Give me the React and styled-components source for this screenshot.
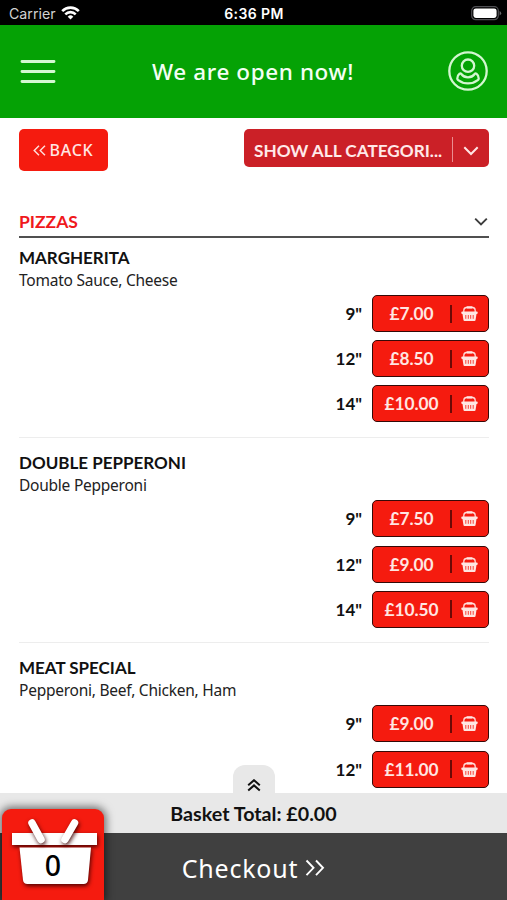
import React from 'react'
import styled, { createGlobalStyle } from 'styled-components'

const menu = [
    {
        name: "MARGHERITA",
        info: "Tomato Sauce, Cheese",
        sizes: [['9"', "£7.00"], ['12"', "£8.50"], ['14"', "£10.00"]],
    },
    {
        name: "DOUBLE PEPPERONI",
        info: "Double Pepperoni",
        sizes: [['9"', "£7.50"], ['12"', "£9.00"], ['14"', "£10.50"]],
    },
    {
        name: "MEAT SPECIAL",
        info: "Pepperoni, Beef, Chicken, Ham",
        sizes: [['9"', "£9.00"], ['12"', "£11.00"]],
    },
]

function StatusBar() {
    return (
        <StatusWrapper>
            <div className="carrier">
                <span>Carrier</span>
                <svg width="19" height="14" viewBox="0 0 19 14" fill="none" stroke="#fff" strokeWidth="2.6">
                    <path d="M1.2 5.1a11.7 11.7 0 0 1 16.6 0" />
                    <path d="M4.3 8.3a7.4 7.4 0 0 1 10.4 0" />
                    <path d="M9.5 13.6L6.7 10.7a4 4 0 0 1 5.6 0z" fill="#fff" stroke="none" />
                </svg>
            </div>
            <div className="time">6:36 PM</div>
            <svg className="battery" width="31" height="15" viewBox="0 0 31 15">
                <rect x="0.7" y="0.7" width="26.6" height="13" rx="4" fill="none" stroke="#505054" strokeWidth="1.2" />
                <rect x="2.4" y="2.4" width="23.2" height="9.6" rx="2.4" fill="#fff" />
                <path d="M28.6 5v4.6q1.6-.8 1.6-2.3t-1.6-2.3z" fill="#66666a" />
            </svg>
        </StatusWrapper>
    )
}

function Header() {
    return (
        <HeaderWrapper>
            <svg width="36" height="26" viewBox="0 0 36 26" stroke="#d5f8d2" strokeWidth="2.9" strokeLinecap="round">
                <path d="M2 2.5h32M2 12.5h32M2 22.5h32" />
            </svg>
            <h1>We are open now!</h1>
            <svg width="42" height="42" viewBox="0 0 42 42" fill="none" stroke="#d3f6d0" strokeWidth="2.3">
                <circle cx="21" cy="20" r="18.7" />
                <circle cx="21" cy="14.700" r="6.200" />
                <path d="M12.600 22.700Q10.300 24.500 10.300 27.400q0 1 .9 1.700 4.200 3.300 9.800 3.300t9.800-3.300q.9-.7.9-1.700 0-2.900-2.300-4.700-1-.6-1.700.3-2.600 3.400-6.700 3.400t-6.700-3.400q-.7-.9-1.700-.3z" strokeLinejoin="round" />
            </svg>
        </HeaderWrapper>
    )
}

function BasketIcon() {
    return (
        <svg width="17" height="17" viewBox="0 0 17 17">
            <path d="M2.800 7V5.400Q2.800 2.700 5.400 2.500h6.200q2.600.2 2.600 2.900V7" fill="none" stroke="#ffd9d4" strokeWidth="1.300" />
            <rect x="5.300" y="1.300" width="6.400" height="2.300" rx="1" fill="#ffe6e2" />
            <rect x="0.300" y="6.600" width="16.400" height="2.500" rx="1" fill="#ffe6e2" />
            <path d="M1.500 9h14l-1 6.200q-.2.800-1 .800H3.500q-.8 0-1-.8z" fill="#ffe6e2" />
            <path d="M4.800 10v3.800M7.300 10v3.800M9.700 10v3.800M12.200 10v3.800" stroke="#f51b0f" strokeWidth="0.800" />
        </svg>
    )
}

function MenuItem({ item }) {
    return (
        <ItemWrapper>
            <h3>{item.name}</h3>
            <p>{item.info}</p>
            <div className="sizes">
                {item.sizes.map(([size, price]) => (
                    <div className="size-row" key={size}>
                        <span>{size}</span>
                        <PriceButton>
                            <span className="price">{price}</span>
                            <span className="line" />
                            <BasketIcon />
                        </PriceButton>
                    </div>
                ))}
            </div>
        </ItemWrapper>
    )
}

function Footer() {
    return (
        <FooterWrapper>
            <PullTab>
                <svg width="14" height="13" viewBox="0 0 14 13" fill="none" stroke="#111" strokeWidth="2">
                    <path d="M1.2 6.3L7 1.2l5.8 5.1M1.2 11.5L7 6.4l5.8 5.1" />
                </svg>
            </PullTab>
            <Total>Basket Total: £0.00</Total>
            <Checkout>
                <span>Checkout</span>
                <svg width="20" height="18" viewBox="0 0 20 18" fill="none" stroke="#fff" strokeWidth="1.9">
                    <path d="M1.5 1.5l7 7.3-7 7.3M11 1.5l7 7.3-7 7.3" />
                </svg>
            </Checkout>
            <BasketBadge>
                <svg width="102" height="91" viewBox="0 0 102 91">
                    <g className="shape" fill="#fff">
                        <path d="M17.500 38.500h71.500l-3 32.500q-.5 4-4.500 4H25.500q-4 0-4.500-4z" />
                        <rect x="10" y="24" width="85" height="12" />
                    </g>
                    <g className="shape" strokeLinecap="round" stroke="#fff" strokeWidth="7.5">
                        <path d="M30 14l9 16.5M72.5 14L63 30.5" />
                    </g>
                </svg>
                <span>0</span>
            </BasketBadge>
        </FooterWrapper>
    )
}

export default function App() {
    return (
        <Screen>
            <GlobalStyle />
            <StatusBar />
            <Header />
            <Content>
                <Toolbar>
                    <BackButton>
                        <svg width="13" height="11" viewBox="0 0 13 11" fill="none" stroke="#ffe1de" strokeWidth="1.4">
                            <path d="M6 .7L1.2 5.5 6 10.3M12 .7L7.2 5.5 12 10.3" />
                        </svg>
                        <span>BACK</span>
                    </BackButton>
                    <CategorySelect>
                        <span className="label">SHOW ALL CATEGORI...</span>
                        <span className="line" />
                        <svg width="16" height="10" viewBox="0 0 16 10" fill="none" stroke="#ffe5e5" strokeWidth="2">
                            <path d="M1.3 1.3L8 8l6.7-6.7" />
                        </svg>
                    </CategorySelect>
                </Toolbar>
                <SectionTitle>
                    <h2>PIZZAS</h2>
                    <svg width="14" height="9" viewBox="0 0 14 9" fill="none" stroke="#3c3c3c" strokeWidth="1.9">
                        <path d="M1.2 1.7L7 7.5l5.8-5.8" />
                    </svg>
                </SectionTitle>
                {menu.map(item => <MenuItem key={item.name} item={item} />)}
            </Content>
            <Footer />
        </Screen>
    )
}

const GlobalStyle = createGlobalStyle`
* {
    box-sizing: border-box;
    margin: 0;
    padding: 0;
}
body {
    background: #fff;
    color: #111;
    font-family: Lato, "Open Sans", sans-serif;
}
svg {
    display: block;
    flex-shrink: 0;
}
button {
    font-family: inherit;
    cursor: pointer;
}
`

const Screen = styled.div`
display: flex;
flex-direction: column;
height: 900px;
overflow: hidden;
`

const StatusWrapper = styled.div`
display: grid;
grid-template-columns: 1fr auto 1fr;
align-items: center;
height: 25px;
padding: 2px 5px 0 9px;
background: #000;
color: #fff;
font-family: Inter, sans-serif;
flex-shrink: 0;

.carrier {
    display: flex;
    align-items: center;
    gap: 5px;
    font-size: 14.2px;
    color: #d2d2d2;
}
.carrier svg {
    margin-top: -2px;
}
.time {
    margin-right: 3px;
    font-size: 14px;
    font-weight: 600;
    letter-spacing: 0.4px;
}
.battery {
    justify-self: end;
}
`

const HeaderWrapper = styled.header`
display: flex;
align-items: center;
justify-content: space-between;
height: 93px;
padding: 0 18px 0 20px;
background: #05a205;
flex-shrink: 0;

h1 {
    padding-left: 3px;
    font-family: "Noto Sans", sans-serif;
    font-size: 22.5px;
    font-weight: 500;
    letter-spacing: 0.6px;
    color: #f4fff4;
}
`

const Content = styled.main`
flex: 1;
min-height: 0;
overflow: hidden;
padding: 11px 18px 0 19px;
`

const Toolbar = styled.div`
display: flex;
justify-content: space-between;
align-items: flex-start;
`

const BackButton = styled.button`
display: flex;
align-items: center;
justify-content: center;
gap: 3px;
width: 89px;
height: 42px;
border: none;
border-radius: 5px;
background: #f51b0f;
color: #ffe6e3;
font-size: 16px;

span {
    font-family: "Noto Sans", sans-serif;
    font-weight: 500;
    letter-spacing: 0.8px;
}
`

const CategorySelect = styled.button`
display: flex;
align-items: center;
width: 245px;
height: 38px;
padding: 0 10px;
border: none;
border-radius: 5px;
background: #cb2027;
color: #ffe9e9;

.label {
    flex: 1;
    padding-top: 5px;
    text-align: left;
    font-size: 17.2px;
    font-weight: 700;
    white-space: nowrap;
}
.line {
    width: 1px;
    height: 25px;
    margin-right: 10px;
    margin-top: 3px;
    background: #ea8d90;
}
svg {
    margin-top: 5px;
}
`

const SectionTitle = styled.div`
display: flex;
align-items: center;
justify-content: space-between;
height: 32px;
margin-top: 35px;
padding-right: 1px;
border-bottom: 2px solid #505050;

h2 {
    font-size: 17.5px;
    font-weight: 700;
    color: #f0191c;
}
`

const ItemWrapper = styled.section`
height: 205.3px;
padding-top: 9px;

& + & {
    height: 205px;
}
&:not(:last-child) {
    background: linear-gradient(#ededed, #ededed) left 0 bottom 5px / 100% 1px no-repeat;
}
h3 {
    font-size: 17px;
    font-weight: 700;
    line-height: 22px;
}
p {
    font-family: "Noto Sans", sans-serif;
    font-size: 15.5px;
    line-height: 22px;
    letter-spacing: -0.24px;
    color: #222;
}
.sizes {
    display: flex;
    flex-direction: column;
    gap: 8.1px;
    margin-top: 4.2px;
}
.size-row {
    display: flex;
    align-items: center;
    justify-content: flex-end;
    gap: 10px;
    font-size: 17px;
    font-weight: 700;
}
`

const PriceButton = styled.button`
display: flex;
align-items: center;
width: 117px;
height: 37px;
padding-right: 10px;
border: 1.5px solid #350907;
border-radius: 5px;
background: #f51b0f;
color: #ffe6e2;
font-size: 17.3px;
font-weight: 700;

.price {
    flex: 1;
    text-align: center;
}
.line {
    width: 2px;
    height: 18px;
    margin-right: 9px;
    background: #6d0905;
}
`

const FooterWrapper = styled.footer`
position: relative;
flex-shrink: 0;
`

const PullTab = styled.div`
position: absolute;
left: 233px;
top: -28px;
display: flex;
justify-content: center;
width: 42px;
height: 29px;
padding-top: 14px;
border-radius: 12px 12px 0 0;
background: #e8e8e8;
`

const Total = styled.div`
height: 40px;
line-height: 42px;
background: #e8e8e8;
text-align: center;
font-size: 19.7px;
font-weight: 700;
`

const Checkout = styled.button`
display: flex;
align-items: center;
justify-content: center;
gap: 7px;
width: 100%;
height: 67px;
padding-top: 2px;
border: none;
background: #404040;
color: #fff;

span {
    font-family: "Noto Sans", sans-serif;
    font-size: 25px;
    letter-spacing: 0.8px;
}
`

const BasketBadge = styled.div`
position: absolute;
left: 2px;
bottom: 0;
width: 102px;
height: 91px;
border-radius: 9px 9px 0 0;
background: #f51b0f;
box-shadow: 0 0 9px 2px rgba(0, 0, 0, 0.55);

.shape {
    filter: drop-shadow(1px 2px 2px rgba(60, 0, 0, 0.9));
}
span {
    position: absolute;
    left: 0;
    top: 37px;
    width: 100%;
    text-align: center;
    font-family: "Noto Sans", sans-serif;
    font-size: 28.5px;
    font-weight: 500;
    line-height: 38px;
    color: #000;
}
`
